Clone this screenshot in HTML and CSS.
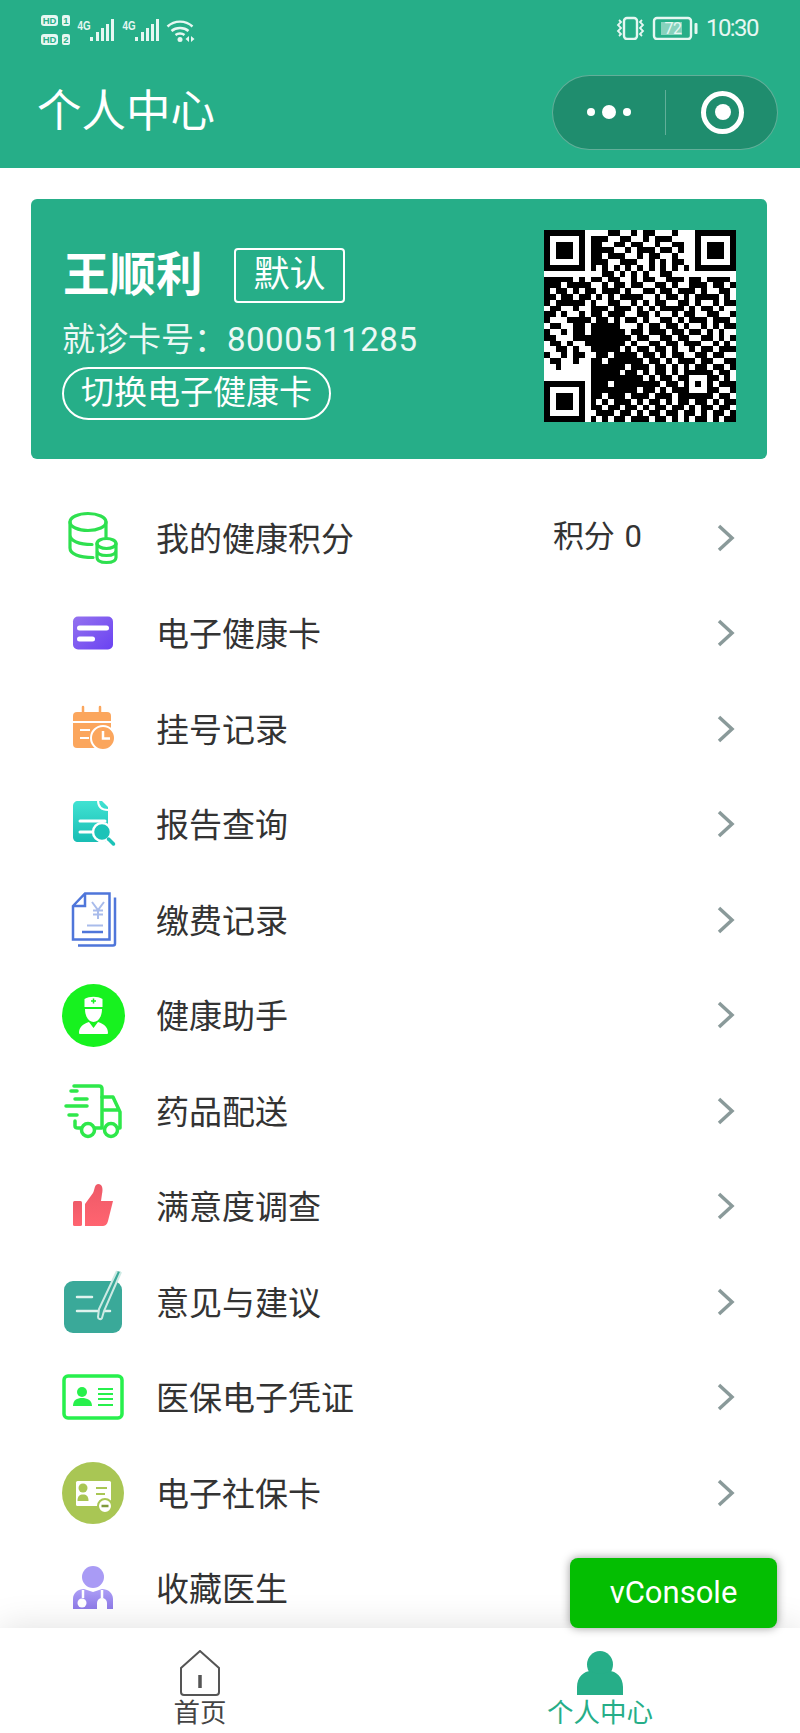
FILE: index.html
```html
<!DOCTYPE html>
<html lang="zh-CN">
<head>
    <meta charset="UTF-8">
    <meta name="viewport" content="width=device-width, initial-scale=1.0">
    <title>个人中心</title>
    <link rel="stylesheet" href="styles.css">
</head>
<body>
<div class="page">
    <header class="header">
        <div class="status-bar">
            <svg class="status-left" width="157" height="32" viewBox="40 10 157 32">
                <rect class="st-fill" x="41" y="12" width="17" height="11" rx="3"/>
                <text class="st-hd" x="49.500" y="21" text-anchor="middle">HD</text>
                <rect class="st-fill" x="62" y="12" width="8" height="11" rx="2"/>
                <text class="st-hd" x="66" y="21" text-anchor="middle">1</text>
                <rect class="st-fill" x="41" y="31" width="17" height="11" rx="3"/>
                <text class="st-hd" x="49.500" y="40" text-anchor="middle">HD</text>
                <rect class="st-fill" x="62" y="31" width="8" height="11" rx="2"/>
                <text class="st-hd" x="66" y="40" text-anchor="middle">2</text>
                <text class="st-4g" x="77.500" y="27" textLength="13" lengthAdjust="spacingAndGlyphs">4G</text>
                <path class="st-fill" d="M90 34h3v4h-3zM96 29h3v9h-3zM101 25h3v13h-3zM106 21h3v17h-3zM111 16h3v22h-3z"/>
                <text class="st-4g" x="122.500" y="27" textLength="13" lengthAdjust="spacingAndGlyphs">4G</text>
                <path class="st-fill" d="M135 34h3v4h-3zM141 29h3v9h-3zM146 25h3v13h-3zM151 21h3v17h-3zM156 16h3v22h-3z"/>
                <path class="st-line" d="M167.500 23.500c7-6.500 18-6.500 25 0M171.500 28c4.500-4 12.500-4 17 0M175.500 32c2.500-2 6.500-2 9 0"/>
                <circle class="st-fill" cx="180" cy="36.500" r="2.500"/>
                <path class="st-fill" d="M189 33v6l-3.500-3zM191 33v6l3.500-3z"/>
            </svg>
            <div class="status-right">
                <svg width="82" height="24" viewBox="616 15 82 24">
                    <rect class="st-line" x="624" y="17" width="13" height="21" rx="3"/>
                    <path class="st-line thin" d="M619 19l2 2-3 3 3 3-3 3 3 3-2 2M642 19l-2 2 3 3-3 3 3 3-3 3 2 2"/>
                    <rect class="st-line" x="654" y="17" width="37" height="21" rx="3"/>
                    <rect class="st-soft" x="661" y="21" width="21" height="13"/>
                    <text class="st-batt" x="673" y="33" text-anchor="middle">72</text>
                    <rect class="st-fill" x="694.500" y="22" width="3" height="11" rx="1"/>
                </svg>
                <span class="clock">10:30</span>
            </div>
        </div>
        <div class="title-bar">
            <h1 class="title">个人中心</h1>
            <div class="capsule">
                <div class="capsule-half">
                    <span class="dot"></span>
                    <span class="dot big"></span>
                    <span class="dot"></span>
                </div>
                <div class="capsule-line"></div>
                <div class="capsule-half">
                    <span class="target"><span class="target-dot"></span></span>
                </div>
            </div>
        </div>
    </header>

    <main class="content">
        <section class="card">
            <div class="card-info">
                <div class="name-row">
                    <span class="name">王顺利</span>
                    <span class="tag">默认</span>
                </div>
                <div class="card-no">就诊卡号：<span class="card-digits">8000511285</span></div>
                <div class="switch-btn">切换电子健康卡</div>
            </div>
            <div class="qr"><svg id="qrCode" width="192" height="192" viewBox="0 0 33 33" shape-rendering="crispEdges"></svg></div>
        </section>

        <ul class="menu">
            <li class="menu-row">
                <svg class="menu-icon" viewBox="0 0 64 64" fill="none" stroke="#2ee04f" stroke-width="3.200" stroke-linecap="round">
                    <ellipse cx="26" cy="16" rx="18" ry="8.500"/>
                    <path d="M8 16v26c0 6 9 9.500 23 9.500M8 29c0 6 9 9.500 22 9.500M44 16v15"/>
                    <ellipse cx="44.500" cy="37.500" rx="9.500" ry="5"/>
                    <path d="M35 37.500v14c0 3.500 4 5 9.500 5s9.500-1.500 9.500-5v-14M35 44.500c0 3.500 4 5 9.500 5s9.500-1.500 9.500-5"/>
                </svg>
                <span class="menu-label">我的健康积分</span>
                <span class="menu-value">积分 0</span>
                <svg class="chevron" width="18" height="28" viewBox="0 0 18 28"><path d="M2 2l13 12L2 26"/></svg>
            </li>
            <li class="menu-row">
                <svg class="menu-icon" viewBox="0 0 64 64">
                    <defs><linearGradient id="gCard" x1="0" y1="0" x2="1" y2="1"><stop offset="0" stop-color="#9472ef"/><stop offset="1" stop-color="#6a42f2"/></linearGradient></defs>
                    <rect x="11" y="15.500" width="40" height="33" rx="5" fill="url(#gCard)"/>
                    <rect x="15" y="24.500" width="32" height="5" rx="2.500" fill="#fff"/>
                    <rect x="15" y="35.500" width="18" height="5" rx="2.500" fill="#fff"/>
                </svg>
                <span class="menu-label">电子健康卡</span>
                <svg class="chevron" width="18" height="28" viewBox="0 0 18 28"><path d="M2 2l13 12L2 26"/></svg>
            </li>
            <li class="menu-row">
                <svg class="menu-icon" viewBox="0 0 64 64">
                    <rect x="11" y="15" width="38" height="36" rx="4" fill="#fba65d"/>
                    <path d="M21 10v9M38 10v9" stroke="#fba65d" stroke-width="2.500" stroke-linecap="round"/>
                    <path d="M11 25h38M18 33h10M18 41h9" stroke="#fff" stroke-width="2" fill="none"/>
                    <circle cx="41" cy="41" r="12" fill="#fba65d" stroke="#fff" stroke-width="2"/>
                    <path d="M41 34v7.500h7" stroke="#fff" stroke-width="2.500" fill="none"/>
                </svg>
                <span class="menu-label">挂号记录</span>
                <svg class="chevron" width="18" height="28" viewBox="0 0 18 28"><path d="M2 2l13 12L2 26"/></svg>
            </li>
            <li class="menu-row">
                <svg class="menu-icon" viewBox="0 0 64 64">
                    <defs><linearGradient id="gDoc" x1="0" y1="0" x2="0" y2="1"><stop offset="0" stop-color="#41e2d2"/><stop offset="1" stop-color="#18bdb4"/></linearGradient></defs>
                    <path d="M16 9h24l6 6v30c0 3-2 5-5 5H16c-3 0-5-2-5-5V14c0-3 2-5 5-5z" fill="url(#gDoc)"/>
                    <path d="M36 8c0 6 3 10 10 10" fill="none" stroke="#fff" stroke-width="2"/>
                    <path d="M18 29h25M18 40h12" stroke="#fff" stroke-width="3" stroke-linecap="round"/>
                    <circle cx="40" cy="40" r="9" fill="#1cc3b8" stroke="#fff" stroke-width="2.500"/>
                    <path d="M46.500 47l5 5" stroke="#1cc3b8" stroke-width="3.500" stroke-linecap="round"/>
                </svg>
                <span class="menu-label">报告查询</span>
                <svg class="chevron" width="18" height="28" viewBox="0 0 18 28"><path d="M2 2l13 12L2 26"/></svg>
            </li>
            <li class="menu-row">
                <svg class="menu-icon" viewBox="0 0 64 64" fill="none">
                    <path d="M11 18L23 5.500h24.500v46H11zM11 18h12V5.500" stroke="#4f76da" stroke-width="2.500"/>
                    <path d="M53 9.500v46c0 1-.5 2-2 2H16" stroke="#4f76da" stroke-width="2.500"/>
                    <path d="M30 14l6 8 6-8M36 22v9M31 22.500h10M31 26.500h10M25 37.500h16" stroke="#a9bceb" stroke-width="2"/>
                    <path d="M20 44h21" stroke="#4f76da" stroke-width="2.500"/>
                </svg>
                <span class="menu-label">缴费记录</span>
                <svg class="chevron" width="18" height="28" viewBox="0 0 18 28"><path d="M2 2l13 12L2 26"/></svg>
            </li>
            <li class="menu-row">
                <svg class="menu-icon" viewBox="0 0 64 64">
                    <circle cx="31.500" cy="32.500" r="31.500" fill="#17f21f"/>
                    <path d="M22.500 16c5-3 13-3 18 0v8h-18z" fill="#fff"/>
                    <path d="M31.500 15.500v5M29 18h5" stroke="#17f21f" stroke-width="1.500"/>
                    <path d="M23 26h17c0 8-4 13-8.500 13S23 34 23 26z" fill="#fff"/>
                    <path d="M17 50c0-6 4-9 10-11l4.500 6 4.500-6c6 2 10 5 10 11 0 1-1 1-2 1H19c-1 0-2 0-2-1z" fill="#fff"/>
                </svg>
                <span class="menu-label">健康助手</span>
                <svg class="chevron" width="18" height="28" viewBox="0 0 18 28"><path d="M2 2l13 12L2 26"/></svg>
            </li>
            <li class="menu-row">
                <svg class="menu-icon" viewBox="0 0 64 64" fill="none" stroke="#2ee84a" stroke-width="3.500" stroke-linecap="round" stroke-linejoin="round">
                    <path d="M12 7h25c2 0 3 1 3 3v39h-7M13 42v5c0 1 1 2 3 2h3"/>
                    <path d="M9 12h6M13 20h12M4 27h21M7 36h8"/>
                    <path d="M40 18h11l7 15v16h-2M42 31h15"/>
                    <circle cx="26" cy="51" r="6.500"/>
                    <circle cx="49" cy="51" r="6.500"/>
                </svg>
                <span class="menu-label">药品配送</span>
                <svg class="chevron" width="18" height="28" viewBox="0 0 18 28"><path d="M2 2l13 12L2 26"/></svg>
            </li>
            <li class="menu-row">
                <svg class="menu-icon" viewBox="0 0 64 64">
                    <defs><linearGradient id="gThumb" x1="0" y1="0" x2="0" y2="1"><stop offset="0" stop-color="#ee5a68"/><stop offset="1" stop-color="#ff6470"/></linearGradient></defs>
                    <rect x="11" y="27" width="9" height="25" rx="1.500" fill="url(#gThumb)"/>
                    <path d="M23 30l8-11c2-4 1-8 5-9 5 0 5 6 4 10l-1 7h12l-5 20c-1 4-3 5-6 5H23z" fill="url(#gThumb)"/>
                </svg>
                <span class="menu-label">满意度调查</span>
                <svg class="chevron" width="18" height="28" viewBox="0 0 18 28"><path d="M2 2l13 12L2 26"/></svg>
            </li>
            <li class="menu-row">
                <svg class="menu-icon" viewBox="0 0 64 64">
                    <rect x="2" y="11" width="58" height="52" rx="9" fill="#3aa999"/>
                    <path d="M15 27h15M15 41h33" stroke="#dff3ee" stroke-width="2.500" stroke-linecap="round"/>
                    <path d="M59 2L42 41l-2 7c-1 2-4 1-4-1l1-8L55 1" fill="#3aa999" stroke="#cdeae4" stroke-width="2"/>
                </svg>
                <span class="menu-label">意见与建议</span>
                <svg class="chevron" width="18" height="28" viewBox="0 0 18 28"><path d="M2 2l13 12L2 26"/></svg>
            </li>
            <li class="menu-row">
                <svg class="menu-icon" viewBox="0 0 64 64">
                    <rect x="2" y="11" width="58" height="42" rx="4" fill="none" stroke="#27f04c" stroke-width="3.500"/>
                    <circle cx="20" cy="27" r="5" fill="#27f04c"/>
                    <path d="M11 41c0-6 4-8 9-8s10 2 10 8z" fill="#27f04c"/>
                    <path d="M36 24h15M36 29h15M36 34h15M36 40h15" stroke="#27f04c" stroke-width="2"/>
                </svg>
                <span class="menu-label">医保电子凭证</span>
                <svg class="chevron" width="18" height="28" viewBox="0 0 18 28"><path d="M2 2l13 12L2 26"/></svg>
            </li>
            <li class="menu-row">
                <svg class="menu-icon" viewBox="0 0 64 64">
                    <circle cx="31" cy="32" r="31" fill="#a9c654"/>
                    <rect x="14" y="20" width="35" height="25" rx="1.500" fill="#fff"/>
                    <circle cx="21" cy="27" r="4.500" fill="#a9c654"/>
                    <path d="M15.500 40c0-5 2-6.500 5.500-6.500s5.500 1.500 5.500 6.500z" fill="#a9c654"/>
                    <path d="M34 27h11M34 33h9" stroke="#a9c654" stroke-width="2"/>
                    <circle cx="43" cy="45" r="7" fill="#fff" stroke="#a9c654" stroke-width="2"/>
                    <path d="M39.500 45h7" stroke="#7f9a3c" stroke-width="2.500"/>
                </svg>
                <span class="menu-label">电子社保卡</span>
                <svg class="chevron" width="18" height="28" viewBox="0 0 18 28"><path d="M2 2l13 12L2 26"/></svg>
            </li>
            <li class="menu-row">
                <svg class="menu-icon" viewBox="0 0 64 64">
                    <defs><linearGradient id="gDoctor" x1="0" y1="0" x2="0" y2="1"><stop offset="0" stop-color="#ad9ff6"/><stop offset="1" stop-color="#8f7be8"/></linearGradient></defs>
                    <circle cx="31" cy="21" r="11" fill="#a99bf5"/>
                    <path d="M11 53V43c0-6 5-10 11-10l9 3 9-3c6 0 11 4 11 10v10z" fill="url(#gDoctor)"/>
                    <path d="M21 34v8" stroke="#fff" stroke-width="2.500"/>
                    <circle cx="20" cy="47" r="4.500" fill="#fff"/>
                    <path d="M35 53v-6a5 5 0 0 1 10 0v6z" fill="#fff"/>
                    <path d="M40 34v8" stroke="#fff" stroke-width="2.500"/>
                </svg>
                <span class="menu-label">收藏医生</span>
            </li>
        </ul>
    </main>

    <nav class="tabbar">
        <div class="tab">
            <svg width="40" height="46" viewBox="0 0 40 46" fill="none" stroke="#555" stroke-width="2"><path d="M1 18L20 1l19 17v24c0 2-1 3-3 3H4c-2 0-3-1-3-3z"/><path d="M20 25v13" stroke-width="3.500"/></svg>
            <span class="tab-text">首页</span>
        </div>
        <div class="tab active">
            <svg width="48" height="46" viewBox="0 0 48 46"><ellipse cx="24" cy="14.500" rx="13" ry="13.500" fill="#26ae88"/><path d="M1 45V37C1 27 8 21 15 21c5 4 13 4 18 0 7 0 14 6 14 16v8z" fill="#26ae88"/></svg>
            <span class="tab-text">个人中心</span>
        </div>
    </nav>

    <div class="vconsole">vConsole</div>
</div>
<script src="qr.js"></script>
</body>
</html>
```

FILE: styles.css
```css
* {
    box-sizing: border-box;
}

html, body {
    margin: 0;
    padding: 0;
    height: 100%;
    background: #fff;
    font-family: Roboto, "Noto Sans CJK SC", sans-serif;
    color: #333;
}

.page {
    position: relative;
    display: flex;
    flex-direction: column;
    height: 1733px;
    overflow: hidden;
}

/* Header */
.header {
    height: 168px;
    background: #26ae88;
    color: #fff;
    flex-shrink: 0;
}

.status-bar {
    display: flex;
    justify-content: space-between;
    align-items: center;
    height: 56px;
    padding: 0 42px 0 40px;
}

.status-left {
    display: block;
    margin-top: 2px;
}

.status-right {
    display: flex;
    align-items: center;
    gap: 8px;
}

.st-fill { fill: #e6f7f2; }
.st-line { fill: none; stroke: #e6f7f2; stroke-width: 2.4; }
.st-line.thin { stroke-width: 1.8; }
.st-soft { fill: rgba(255, 255, 255, 0.45); }

.st-hd {
    font-family: "Liberation Sans", sans-serif;
    font-size: 9.5px;
    font-weight: 700;
    fill: #26ae88;
}

.st-4g {
    font-family: "Liberation Sans", sans-serif;
    font-size: 13px;
    font-weight: 700;
    fill: #e6f7f2;
}

.st-batt {
    font-size: 16px;
    fill: #e6f7f2;
    letter-spacing: -0.5px;
}

.clock {
    font-size: 24px;
    letter-spacing: -1.6px;
    color: #e6f7f2;
    width: 52px;
}

.title-bar {
    display: flex;
    justify-content: space-between;
    align-items: center;
    height: 112px;
    padding: 0 22px 0 37px;
}

.title {
    margin: 0;
    font-size: 44.5px;
    font-weight: 400;
    line-height: 60px;
}

.capsule {
    display: flex;
    align-items: center;
    width: 226px;
    height: 75px;
    background: #1f8d6e;
    border: 1px solid rgba(255, 255, 255, 0.3);
    border-radius: 38px;
}

.capsule-half {
    flex: 1;
    display: flex;
    justify-content: center;
    align-items: center;
    gap: 7px;
}

.capsule-line {
    width: 1px;
    height: 45px;
    background: rgba(255, 255, 255, 0.3);
}

.dot {
    width: 8px;
    height: 8px;
    border-radius: 50%;
    background: #fff;
}

.dot.big {
    width: 14px;
    height: 14px;
}

.target {
    display: flex;
    justify-content: center;
    align-items: center;
    width: 43px;
    height: 43px;
    margin-left: 3px;
    border: 5px solid #fff;
    border-radius: 50%;
}

.target-dot {
    width: 16px;
    height: 16px;
    border-radius: 50%;
    background: #fff;
}

/* Content */
.content {
    flex: 1;
    min-height: 0;
    overflow: hidden;
    padding-top: 31px;
}

.card {
    display: flex;
    justify-content: space-between;
    align-items: flex-start;
    height: 260px;
    margin: 0 33px 0 31px;
    padding: 31px 31px 0 31px;
    background: #26ae88;
    border-radius: 6px;
    color: #fff;
}

.card-info {
    padding-top: 18px;
}

.name-row {
    display: flex;
    align-items: center;
    height: 55px;
}

.name {
    width: 136px;
    margin-left: 1px;
    margin-right: 35px;
    font-size: 46.5px;
    font-weight: 700;
    line-height: 55px;
    white-space: nowrap;
}

.tag {
    width: 111px;
    height: 55px;
    border: 2px solid #fff;
    border-radius: 4px;
    font-size: 36px;
    line-height: 50px;
    text-align: center;
}

.card-no {
    margin-top: 12px;
    font-size: 33px;
    line-height: 50px;
    white-space: nowrap;
    color: #ecf8f5;
}

.card-digits {
    letter-spacing: 0.5px;
}

.switch-btn {
    width: 269px;
    height: 53px;
    margin-top: 2px;
    border: 2px solid #fff;
    border-radius: 27px;
    font-size: 33px;
    line-height: 47px;
    text-align: center;
    white-space: nowrap;
}

.qr {
    width: 192px;
    height: 192px;
    background: #fff;
}

.qr svg {
    display: block;
    fill: #000;
}

.menu {
    margin: 31px 0 0;
    padding: 0;
    list-style: none;
}

.menu-row {
    display: flex;
    align-items: center;
    height: 95.5px;
    padding: 0 65px 0 62px;
}

.menu-icon {
    width: 64px;
    height: 64px;
    margin-right: 30px;
    flex-shrink: 0;
}

.menu-label {
    flex: 1;
    margin-bottom: 2px;
    font-size: 33px;
    color: #333;
    white-space: nowrap;
}

.menu-value {
    margin-right: 75px;
    margin-bottom: 8px;
    font-size: 31px;
    word-spacing: 2px;
    color: #333;
}

.chevron {
    flex-shrink: 0;
}

.chevron path {
    fill: none;
    stroke: #8a9a9a;
    stroke-width: 3.5;
}

/* Tab bar */
.tabbar {
    position: relative;
    z-index: 2;
    display: flex;
    height: 105px;
    flex-shrink: 0;
    background: #fff;
    box-shadow: 0 0 36px rgba(0, 0, 0, 0.13);
}

.tab {
    flex: 1;
    display: flex;
    flex-direction: column;
    align-items: center;
    padding-top: 22px;
    color: #444;
}

.tab.active {
    color: #26ae88;
}

.tab-text {
    font-size: 26.5px;
    line-height: 34px;
}

/* Debug button floats over the list */
.vconsole {
    position: absolute;
    z-index: 3;
    left: 570px;
    top: 1558px;
    width: 207px;
    height: 70px;
    background: #04be02;
    border-radius: 8px;
    box-shadow: 0 0 10px rgba(0, 0, 0, 0.4);
    color: #fff;
    font-size: 31px;
    line-height: 70px;
    text-align: center;
}
```

FILE: qr.js
```js
// QR code modules, one string per row
const qrRows = [
    '111111100001100101100010001111111',
    '100000101110011001011100001000001',
    '101110101100110110010011001011101',
    '101110101111001011101101001011101',
    '101110101101110010110010001011101',
    '100000101110011100101011001000001',
    '111111101010101010101010101111111',
    '000000000011010101001100000000000',
    '11111010110 11001011001 11011011110',
    '11101111001 01101100110 10011101101',
    '10110101101 11010011011 01110100110',
    '11011011010 10111100101 10101111010',
    '10111110100 11001010110 01101001011',
    '01100100111 01110101011 11010110100',
    '11010010110 11100110100 10110011001',
    '10001111011 01011010011 01011101110',
    '01100110111 11000101101 10100101011',
    '10010110 111111 0110111011011010100',
    '11000111 111111 1011001101100110101',
    '01101001 111111 0100110110111001010',
    '00110100 111110 1011011010010110111',
    '10010110 011011 1101101011001101100',
    '01100100 11011111 10110101110110011',
    '00100000 11111101 11011010101101101',
    '00000000 11111011 01011010 11111 0110',
    '00000000 11111111 10101101 10001 1010',
    '11111110 11101111 11110110 10101 0111',
    '10000010 11111111 01101011 10001 1001',
    '10111010 11011101 11011101 11111 0110',
    '10111010 1010111010110101 10110 1011',
    '10111010 1101101101011011 01011 0110',
    '10000010 0111011010110110 11010 1101',
    '11111110 1010110111011010 10110 1011'
];

let qrPath = '';
qrRows.forEach((row, y) => {
    row.replace(/ /g, '').split('').forEach((cell, x) => {
        if (cell === '1') qrPath += `M${x} ${y}h1v1h-1z`;
    });
});

const qrShape = document.createElementNS('http://www.w3.org/2000/svg', 'path');
qrShape.setAttribute('d', qrPath);
document.getElementById('qrCode').appendChild(qrShape);
```
